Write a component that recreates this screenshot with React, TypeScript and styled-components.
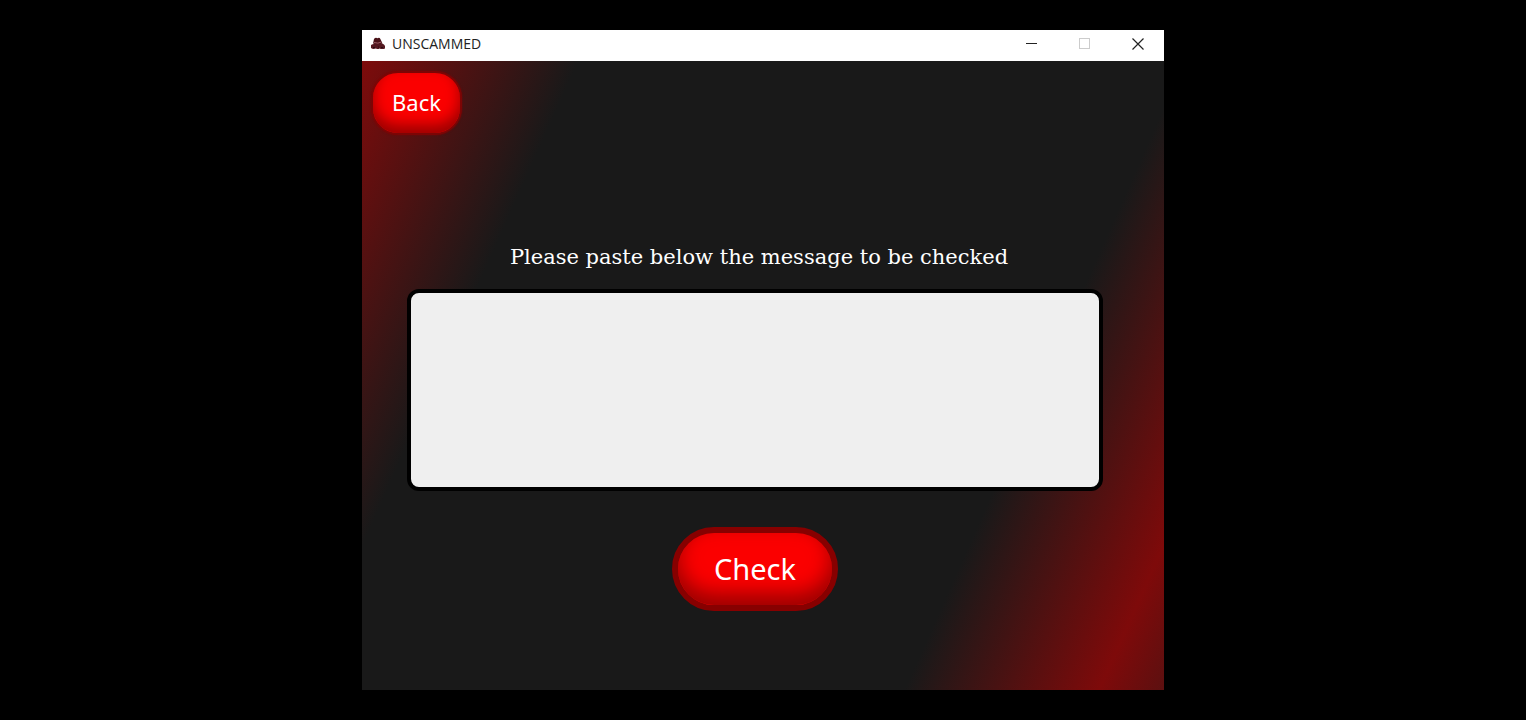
import React, { useState } from "react";
import styled, { createGlobalStyle } from "styled-components";

const GlobalStyle = createGlobalStyle`
  * { box-sizing: border-box; }
  body { margin: 0; background: #000; }
`;

const Desktop = styled.div`
  display: flex;
  justify-content: center;
  min-height: 100vh;
  padding: 30px 16px;
  background: #000;
`;

const AppWindow = styled.div`
  display: flex;
  flex-direction: column;
  width: 100%;
  max-width: 802px;
`;

const TitleBar = styled.header`
  display: flex;
  align-items: center;
  justify-content: space-between;
  height: 31px;
  padding-bottom: 4px;
  background: #fff;
`;

const TitleGroup = styled.div`
  display: flex;
  align-items: center;
  gap: 6px;
  padding-left: 8px;
`;

const Title = styled.h1`
  margin: 0;
  font: 400 14px/20px "Open Sans", "Noto Sans", sans-serif;
  color: #222;
`;

const Controls = styled.div`
  display: flex;
  gap: 5px;
  padding-right: 2px;
`;

const ControlButton = styled.button`
  display: grid;
  place-items: center;
  width: 48px;
  height: 26px;
  padding: 0;
  border: 0;
  background: none;
  color: #222;
  &:disabled { color: #ccc; }
`;

const Screen = styled.main`
  display: flex;
  flex: 1;
  flex-direction: column;
  background: linear-gradient(
    114deg,
    #7e0b0b 0%,
    #191919 20%,
    #191919 76%,
    #7e0a0a 94%,
    #5c1010 100%
  );
`;

const Nav = styled.nav`
  display: flex;
  padding: 10px 9px;
`;

const GlossyButton = styled.button<{ $large?: boolean }>`
  width: ${({ $large }) => ($large ? 166 : 91)}px;
  height: ${({ $large }) => ($large ? 84 : 64)}px;
  padding: 0 0 2px;
  border: ${({ $large }) => ($large ? "6px solid #870000" : "2px solid #7c0505")};
  border-radius: ${({ $large }) => ($large ? 42 : 27)}px;
  background: #fb0000;
  box-shadow: ${({ $large }) =>
    $large
      ? "inset 0 -11px 20px rgba(90, 0, 0, 0.6)"
      : "inset 0 -8px 14px rgba(90, 0, 0, 0.6), 0 0 2px #7c0505"};
  color: #fff;
  font-family: "Noto Sans", "Open Sans", sans-serif;
  font-size: ${({ $large }) => ($large ? 29 : 22)}px;
  line-height: 1;
  cursor: pointer;
`;

const MessageForm = styled.form`
  display: flex;
  flex-direction: column;
  align-items: center;
  padding: 96px 61px 32px 45px;
`;

const Prompt = styled.label`
  padding: 0 0 16px 8px;
  font: 400 21px/32px "DejaVu Serif", serif;
  color: #fff;
  text-align: center;
`;

const MessageBox = styled.textarea`
  display: block;
  width: 100%;
  height: 202px;
  margin-bottom: 36px;
  padding: 12px;
  border: 4px solid #000;
  border-radius: 12px;
  outline: 0;
  background: #efefef;
  font: 400 18px/24px "Noto Sans", sans-serif;
  color: #111;
  resize: none;
`;

const SpyIcon = () => (
  <svg width="16" height="14" viewBox="0 0 16 14" aria-hidden="true">
    <path d="M3 6.500 4 2Q5.500 0 7.500 1.200 9.500 0 10.500 2.200L12.500 6.500Q8 8.500 3 6.500Z" fill="#4a1218" />
    <path d="M1 8Q3 6.500 5 7L12 6.500Q14.500 7 15 9V11.500Q12 12.500 9.500 11.500 8 12.500 6 11.500 3 12.500 1 11Z" fill="#541820" />
    <path d="M4 5.500Q8 7 11.500 5" stroke="#a06068" fill="none" />
    <path d="M3 10.500H5M8 10H9M11 10.500H13" stroke="#240c10" fill="none" />
  </svg>
);

export default function App() {
  const [message, setMessage] = useState("");

  return (
    <>
      <GlobalStyle />
      <Desktop>
        <AppWindow>
          <TitleBar>
            <TitleGroup>
              <SpyIcon />
              <Title>UNSCAMMED</Title>
            </TitleGroup>
            <Controls>
              <ControlButton type="button" aria-label="Minimize">
                <svg width="12" height="12" viewBox="0 0 12 12" shapeRendering="crispEdges">
                  <path d="M0 5.500H11" stroke="currentColor" />
                </svg>
              </ControlButton>
              <ControlButton type="button" aria-label="Maximize" disabled>
                <svg width="12" height="12" viewBox="0 0 12 12">
                  <rect x=".5" y=".5" width="10" height="10" fill="none" stroke="currentColor" />
                </svg>
              </ControlButton>
              <ControlButton type="button" aria-label="Close">
                <svg width="12" height="12" viewBox="0 0 12 12">
                  <path d="M.5.500 11.500 11.500M11.500.500.500 11.500" fill="none" stroke="currentColor" strokeWidth="1.200" />
                </svg>
              </ControlButton>
            </Controls>
          </TitleBar>
          <Screen>
            <Nav>
              <GlossyButton type="button">Back</GlossyButton>
            </Nav>
            <MessageForm onSubmit={(event) => event.preventDefault()}>
              <Prompt htmlFor="message">Please paste below the message to be checked</Prompt>
              <MessageBox
                id="message"
                value={message}
                onChange={(event) => setMessage(event.target.value)}
              />
              <GlossyButton type="submit" $large>Check</GlossyButton>
            </MessageForm>
          </Screen>
        </AppWindow>
      </Desktop>
    </>
  );
}
